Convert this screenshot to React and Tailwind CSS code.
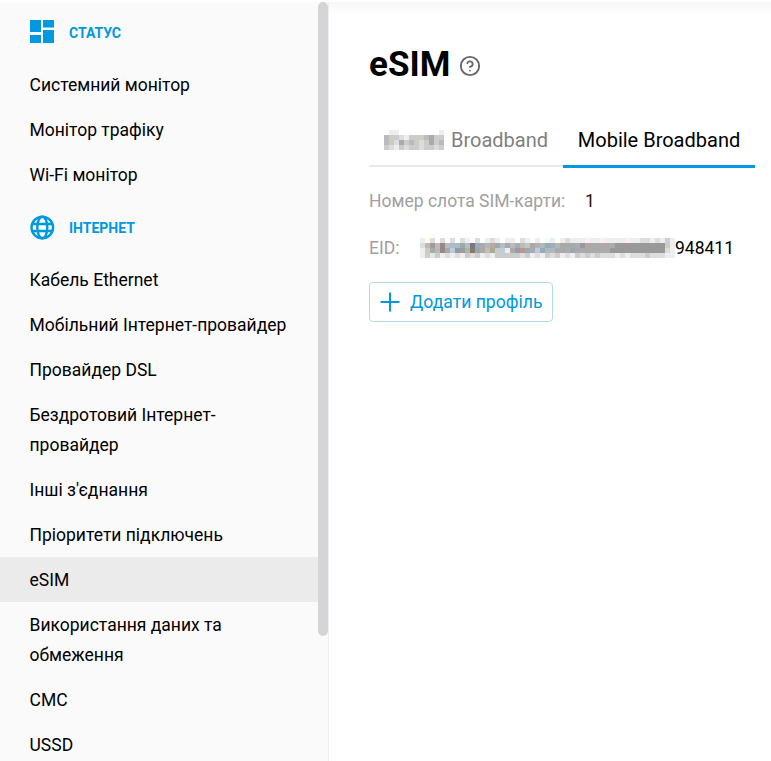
import { CircleHelp } from "lucide-react";

const EID_ROWS = [
  "eee ffe ddd fff ddd fff ddd fff ddd eef fff ddd fff eee ddd eee fff eee eee fff ddd eef fff eee fff eff eee ffe eee ddd eee eee eee fee eee eee fee eee eee eee eee fee eee eee ddd ddd eee ddd eee ccd eee",
  "ddd bbb a99 bbb 988 bbb abc abb 9aa bbb 778 9ab aaa abb ba9 9ab bbb aaa bbb aab bbb bcb aaa bab abb 9ab aab abb aaa aaa aaa aab 999 aaa aaa aaa aaa aaa aaa 999 999 999 999 999 999 999 999 999 999 ccc eee",
  "eee ccb aaa bbb 988 aaa bcd 999 99a ab9 877 9a9 aaa cba aa9 ccb bcd eee aaa 99a b98 9ab aab bcd 9ab abb abb aaa aaa aab 9aa aaa aaa aaa aaa aaa aaa aaa 999 999 999 999 999 999 999 999 999 999 999 ddc eee",
  "eee ccc ded ccc eee ddd eee ddd eee ccc ddd ccc eee ddd eee ccc ccc ccc ccc ccc ddd ccc eee ddd eee ccc ddd ccc eee ddd eee ccc ddd ccc ddd ccc ddd ddd ddd eee ddd eee ddd ddd ddd ccc ddd ddd ddd eee eee",
];

const TAB_ROWS = [
  "fff eee eee fff fff fff fff fff fff fff fff eee fff fff fff",
  "bbb ccc ccc ddd eee ccc ccc ccc bbb aaa ccc ccc ccc ccc eee",
  "bbb ccb ddd aaa ccc bbb ccc ddc ccc aaa ccc bbb ccc bbb eef",
  "ccc ddd eee ccc ddd ccc ccc ddd ccc ccc ddd ccc fff ccc fff",
];

const SECTIONS = [
  {
    title: "Статус",
    icon: <DashboardIcon />,
    items: ["Системний монітор", "Монітор трафіку", "Wi-Fi монітор"],
  },
  {
    title: "Інтернет",
    icon: <GlobeIcon />,
    items: [
      "Кабель Ethernet",
      "Мобільний Інтернет-провайдер",
      "Провайдер DSL",
      "Бездротовий Інтернет-провайдер",
      "Інші з'єднання",
      "Пріоритети підключень",
      "eSIM",
      "Використання даних та обмеження",
      "СМС",
      "USSD",
    ],
  },
];

function DashboardIcon() {
  return (
    <svg width="24" height="24" viewBox="0 0 24 24" fill="#0098de">
      <rect x="0" y="0" width="11" height="12" />
      <rect x="13" y="0" width="11" height="7.5" />
      <rect x="0" y="15" width="11" height="8" />
      <rect x="13" y="10" width="11" height="13" />
    </svg>
  );
}

function GlobeIcon() {
  return (
    <svg width="25" height="25" viewBox="0 0 25 25" fill="none" stroke="#0098de" strokeWidth="2.4">
      <circle cx="12.3" cy="12.5" r="10.8" />
      <ellipse cx="12.3" cy="12.5" rx="5" ry="10.8" />
      <path d="M2 9h20.6M2 16h20.6" />
    </svg>
  );
}

// pixelated redaction over the hidden part of a value
function Mosaic({ rows, width, height }) {
  return (
    <svg width={width} height={height} shapeRendering="crispEdges" className="block shrink-0">
      {rows.map((row, y) =>
        row.split(" ").map((color, x) => (
          <rect key={`${y}-${x}`} x={x * 5} y={y * 5} width="5" height="5" fill={`#${color}`} />
        ))
      )}
    </svg>
  );
}

function Sidebar() {
  return (
    <aside className="relative h-full w-[329px] shrink-0 overflow-hidden border-r border-[#eeeeee] bg-[#fafafa]">
      {SECTIONS.map((section) => (
        <div key={section.title}>
          <div className="flex h-[60px] items-center pl-[30px]">
            <span className="flex w-[39px] shrink-0">{section.icon}</span>
            <span className="mt-[2px] text-[14px] font-bold uppercase text-[#0098de]">{section.title}</span>
          </div>
          {section.items.map((item) => (
            <div
              key={item}
              className={`py-[7.5px] pl-[29.5px] pr-[34px] text-[17.5px] leading-[30px] text-black ${
                item === "eSIM" ? "bg-[#ebebeb]" : ""
              }`}
            >
              {item}
            </div>
          ))}
        </div>
      ))}
      <div className="absolute right-0 top-0 h-[634px] w-[10px] rounded-[5px] bg-[#d5d5d7]" />
    </aside>
  );
}

export default function App() {
  return (
    <div className="h-[761px] w-[771px] overflow-hidden bg-white pt-[2px] font-['Roboto',sans-serif]">
      <div className="flex h-full">
        <Sidebar />
        <main className="relative min-w-0 flex-1 pl-[40px]">
          <div className="absolute inset-x-0 top-0 h-[12px] bg-gradient-to-b from-[#f7f7f7] to-white" />

          <div className="flex h-[126px] items-center pb-[1px]">
            <h1 className="text-[35px] font-bold leading-none text-black">eSIM</h1>
            <CircleHelp size={22} strokeWidth={2} className="ml-[9px] mt-[2px] text-[#666666]" />
          </div>

          <div className="flex h-[39px] w-[386px]">
            <div className="flex w-[194px] items-center gap-[7px] border-b-2 border-[#e8e8e8] pb-[13px] pl-[15px] text-[20px] text-[#808080]">
              <Mosaic rows={TAB_ROWS} width={60} height={20} />
              <span>Broadband</span>
            </div>
            <div className="flex h-[40px] w-[192px] items-center justify-center border-b-[3px] border-[#0098de] pb-[14px] text-[20px] text-black">
              Mobile Broadband
            </div>
          </div>

          <div className="mt-[16px] flex h-[36px] items-center text-[17.5px]">
            <span className="w-[217px] text-[#a0a0a0]">Номер слота SIM-карти:</span>
            <span className="-ml-[1px] text-[#301000]">1</span>
          </div>

          <div className="mt-[11px] flex h-[36px] items-center text-[17.5px]">
            <span className="w-[51px] text-[#a0a0a0]">EID:</span>
            <Mosaic rows={EID_ROWS} width={255} height={20} />
            <span className="text-black">948411</span>
          </div>

          <button className="mt-[16px] flex h-[40px] w-[184px] items-center rounded-[4px] border border-[#b3d9ee] pl-[10px] text-[17.6px] text-[#0098de]">
            <svg width="20" height="20" viewBox="0 0 20 20" stroke="#0098de" strokeWidth="2">
              <path d="M10 0.5v19M0.5 10h19" />
            </svg>
            <span className="ml-[10px]">Додати профіль</span>
          </button>
        </main>
      </div>
    </div>
  );
}
